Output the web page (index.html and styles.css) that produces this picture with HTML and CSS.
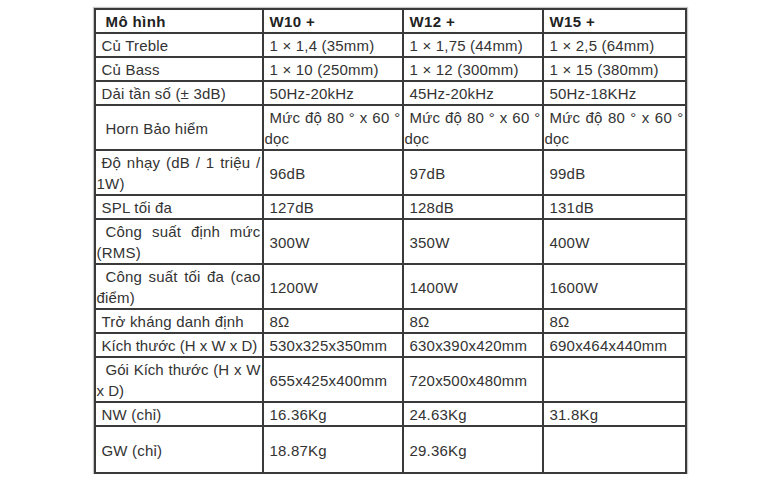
FILE: index.html
```html
<!DOCTYPE html>
<html lang="vi">
<head>
<meta charset="utf-8">
<title>Thông số kỹ thuật</title>
<link rel="stylesheet" href="styles.css">
</head>
<body>
<table class="spec">
  <colgroup>
    <col class="c1"><col class="c2"><col class="c3"><col class="c4">
  </colgroup>
  <tr class="head">
    <th class="lead2">Mô hình</th><th>W10 +</th><th>W12 +</th><th>W15 +</th>
  </tr>
  <tr><td>Củ Treble</td><td>1 × 1,4 (35mm)</td><td>1 × 1,75 (44mm)</td><td>1 × 2,5 (64mm)</td></tr>
  <tr><td>Củ Bass</td><td>1 × 10 (250mm)</td><td>1 × 12 (300mm)</td><td>1 × 15 (380mm)</td></tr>
  <tr><td>Dải tần số (± 3dB)</td><td>50Hz-20kHz</td><td>45Hz-20kHz</td><td>50Hz-18KHz</td></tr>
  <tr><td class="lead2">Horn Bảo hiểm</td><td class="wrap">Mức độ 80 ° x 60 ° dọc</td><td class="wrap">Mức độ 80 ° x 60 ° dọc</td><td class="wrap">Mức độ 80 ° x 60 ° dọc</td></tr>
  <tr><td class="wrap lead2">Độ nhạy (dB / 1 triệu / 1W)</td><td>96dB</td><td>97dB</td><td>99dB</td></tr>
  <tr><td>SPL tối đa</td><td>127dB</td><td>128dB</td><td>131dB</td></tr>
  <tr><td class="wrap lead3">Công suất định mức (RMS)</td><td>300W</td><td>350W</td><td>400W</td></tr>
  <tr class="r47"><td class="wrap lead3">Công suất tối đa (cao điểm)</td><td>1200W</td><td>1400W</td><td>1600W</td></tr>
  <tr><td>Trở kháng danh định</td><td>8Ω</td><td>8Ω</td><td>8Ω</td></tr>
  <tr><td class="tight">Kích thước (H x W x D)</td><td>530x325x350mm</td><td>630x390x420mm</td><td>690x464x440mm</td></tr>
  <tr><td class="wrap lead3 tight">Gói Kích thước (H x W x D)</td><td>655x425x400mm</td><td>720x500x480mm</td><td></td></tr>
  <tr class="r23"><td>NW (chỉ)</td><td>16.36Kg</td><td>24.63Kg</td><td>31.8Kg</td></tr>
  <tr class="r45"><td>GW (chỉ)</td><td>18.87Kg</td><td>29.36Kg</td><td></td></tr>
</table>
</body>
</html>
```

FILE: styles.css
```css
html, body {
  margin: 0;
  background: #ffffff;
}
body {
  padding-top: 8px;
  font-family: "Liberation Sans", Arial, sans-serif;
  font-size: 15px;
  letter-spacing: 0.2px;
  color: #333333;
}
.spec {
  border-collapse: collapse;
  margin: 0 auto;
  width: 591px;
  table-layout: fixed;
  box-shadow: 0 0 1px 1px #c8c8c8;
}
.c1 { width: 168px; }
.c2 { width: 140px; }
.c3 { width: 140px; }
.c4 { width: 143px; }
.spec th,
.spec td {
  border: 2px solid #3a3a3a;
  padding: 1px 1px 0 1px;
  line-height: 21px;
  text-align: left;
  vertical-align: middle;
  text-indent: 5px;
}
.spec th {
  font-weight: bold;
  color: #222222;
  letter-spacing: 0.4px;
}
.spec td.wrap {
  text-align: justify;
  text-indent: 5px;
}
.spec td.tight { letter-spacing: 0; }
.spec .lead2 { text-indent: 9px; }
.spec td.lead3 { text-indent: 9px; }
.r47 td { height: 42px; }
.r23 td { height: 19px; }
.r45 td { height: 44px; }
```
